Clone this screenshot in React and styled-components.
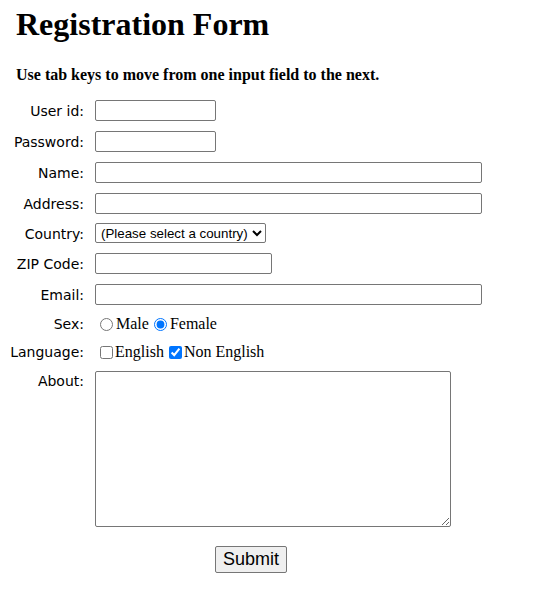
import React from "react";
import styled, { createGlobalStyle } from "styled-components";

const GlobalStyle = createGlobalStyle`
  html, body { margin: 0; padding: 0; background: #fff; }
  body { font-family: "Liberation Serif", "Times New Roman", serif; color: #000; }
`;

const Page = styled.div`
  padding-top: 6px;
  width: 560px;
`;

const Title = styled.h1`
  margin: 0 0 0 16px;
  font-family: "Liberation Serif", "Times New Roman", serif;
  font-size: 32px;
  font-weight: bold;
  line-height: 36px;
`;

const Subtitle = styled.h4`
  margin: 24px 0 0 16px;
  font-family: "Liberation Serif", "Times New Roman", serif;
  font-size: 16px;
  font-weight: bold;
  line-height: 18px;
`;

const Form = styled.form`
  margin-top: 16px;
  display: flex;
  flex-direction: column;
  gap: 10px;
`;

const Row = styled.div`
  display: flex;
  align-items: ${(p) => (p.$top ? "flex-start" : "center")};
`;

const Label = styled.label`
  flex: 0 0 84px;
  margin-right: 11px;
  padding-top: ${(p) => (p.$top ? "1px" : "0")};
  text-align: right;
  font-family: "DejaVu Sans", Verdana, sans-serif;
  font-size: 14px;
  line-height: 18px;
  color: #000;
`;

const fieldBase = `
  box-sizing: border-box;
  border: 1px solid #767676;
  border-radius: 2px;
  background: #fff;
  font-family: "Liberation Sans", Arial, sans-serif;
  font-size: 13.333px;
`;

const TextInput = styled.input`
  ${fieldBase}
  margin: 0;
  width: ${(p) => p.$w}px;
  height: 21px;
  padding: 1px 2px;
`;

const Select = styled.select`
  ${fieldBase}
  margin: -1px 0 0;
  width: 171px;
  height: 20px;
  padding: 0 0 0 1px;
  color: #000;
`;

const Choices = styled.div`
  display: flex;
  align-items: center;
  height: 18px;
  font-family: "Liberation Serif", "Times New Roman", serif;
  font-size: 16px;
  line-height: 18px;
`;

const ChoiceLabel = styled.label`
  display: inline-flex;
  align-items: center;
`;

const Choice = styled.input`
  margin: 0 ${(p) => (p.type === "radio" ? 3 : 2)}px 0 ${(p) => (p.type === "radio" ? 5 : 5)}px;
  width: 13px;
  height: 13px;
  accent-color: #0075ff;
`;

const TextArea = styled.textarea`
  ${fieldBase}
  margin: 0;
  width: 356px;
  height: 156px;
  padding: 2px;
`;

const SubmitRow = styled.div`
  width: 502px;
  display: flex;
  justify-content: center;
  margin-top: 9px;
`;

const SubmitButton = styled.button`
  font-family: "Liberation Sans", Arial, sans-serif;
  font-size: 18px;
  line-height: 21px;
  padding: 2px 7px;
  background: #efefef;
  border: 1px solid #767676;
  border-radius: 2px;
  color: #000;
`;

export default function App() {
  return (
    <>
      <GlobalStyle />
      <Page>
        <Title>Registration Form</Title>
        <Subtitle>Use tab keys to move from one input field to the next.</Subtitle>
        <Form onSubmit={(e) => e.preventDefault()}>
          <Row>
            <Label htmlFor="userid">User id:</Label>
            <TextInput id="userid" type="text" $w={121} />
          </Row>
          <Row>
            <Label htmlFor="passid">Password:</Label>
            <TextInput id="passid" type="password" $w={121} />
          </Row>
          <Row>
            <Label htmlFor="username">Name:</Label>
            <TextInput id="username" type="text" $w={387} />
          </Row>
          <Row>
            <Label htmlFor="address">Address:</Label>
            <TextInput id="address" type="text" $w={387} />
          </Row>
          <Row>
            <Label htmlFor="country">Country:</Label>
            <Select id="country" defaultValue="Default">
              <option value="Default">(Please select a country)</option>
              <option value="AF">Australia</option>
              <option value="CA">Canada</option>
              <option value="IN">India</option>
            </Select>
          </Row>
          <Row>
            <Label htmlFor="zip">ZIP Code:</Label>
            <TextInput id="zip" type="text" $w={177} />
          </Row>
          <Row>
            <Label htmlFor="email">Email:</Label>
            <TextInput id="email" type="text" $w={387} />
          </Row>
          <Row>
            <Label as="span">Sex:</Label>
            <Choices>
              <ChoiceLabel>
                <Choice type="radio" name="sex" value="Male" />
                Male
              </ChoiceLabel>
              <ChoiceLabel>
                <Choice type="radio" name="sex" value="Female" defaultChecked />
                Female
              </ChoiceLabel>
            </Choices>
          </Row>
          <Row>
            <Label as="span">Language:</Label>
            <Choices>
              <ChoiceLabel>
                <Choice type="checkbox" name="en" />
                English
              </ChoiceLabel>
              <ChoiceLabel>
                <Choice type="checkbox" name="nonen" defaultChecked />
                Non English
              </ChoiceLabel>
            </Choices>
          </Row>
          <Row $top>
            <Label htmlFor="desc" $top>About:</Label>
            <TextArea id="desc" />
          </Row>
          <SubmitRow>
            <SubmitButton type="submit">Submit</SubmitButton>
          </SubmitRow>
        </Form>
      </Page>
    </>
  );
}
